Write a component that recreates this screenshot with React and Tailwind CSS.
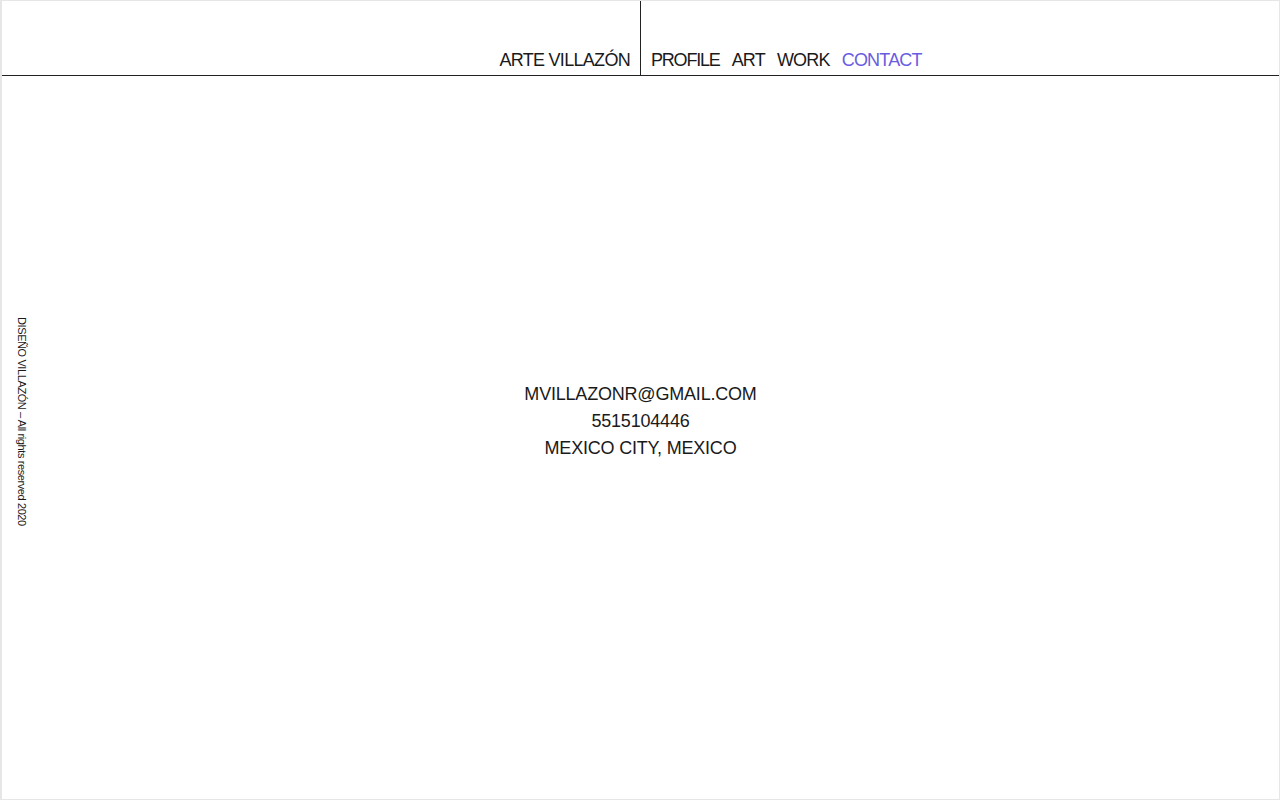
export default function App() {
  const font = { fontFamily: '"Liberation Sans", Arial, sans-serif' };
  return (
    <div
      className="relative w-full h-[800px] bg-white border-t border-b border-r border-l-2 border-[#e6e6e6] overflow-hidden text-[#1a1a1a]"
      style={font}
    >
      <header className="h-[75px] border-b border-[#222] flex">
        <div className="flex-1 flex justify-end items-end pr-[10px] pb-[4px]">
          <span className="text-[18px] leading-[22px] tracking-[-0.7px]">ARTE VILLAZÓN</span>
        </div>
        <div className="flex-1 border-l border-[#222] flex items-end pl-[10px] pb-[4px] text-[18px] leading-[22px] tracking-[-0.8px]">
          <span className="mr-[12px] tracking-[-1.2px]">PROFILE</span>
          <span className="mr-[12px]">ART</span>
          <span className="mr-[12px]">WORK</span>
          <span className="text-[#6a5ce0]">CONTACT</span>
        </div>
      </header>
      <aside className="absolute left-[13px] top-[316px] text-[11px] leading-[13px] tracking-[-0.4px] [writing-mode:vertical-rl]">
        DISEÑO VILLAZÓN – All rights reserved 2020
      </aside>
      <main className="flex flex-col items-center pt-[305px] text-[18px] leading-[27px] tracking-[-0.2px]">
        <span>MVILLAZONR@GMAIL.COM</span>
        <span>5515104446</span>
        <span>MEXICO CITY, MEXICO</span>
      </main>
    </div>
  );
}
